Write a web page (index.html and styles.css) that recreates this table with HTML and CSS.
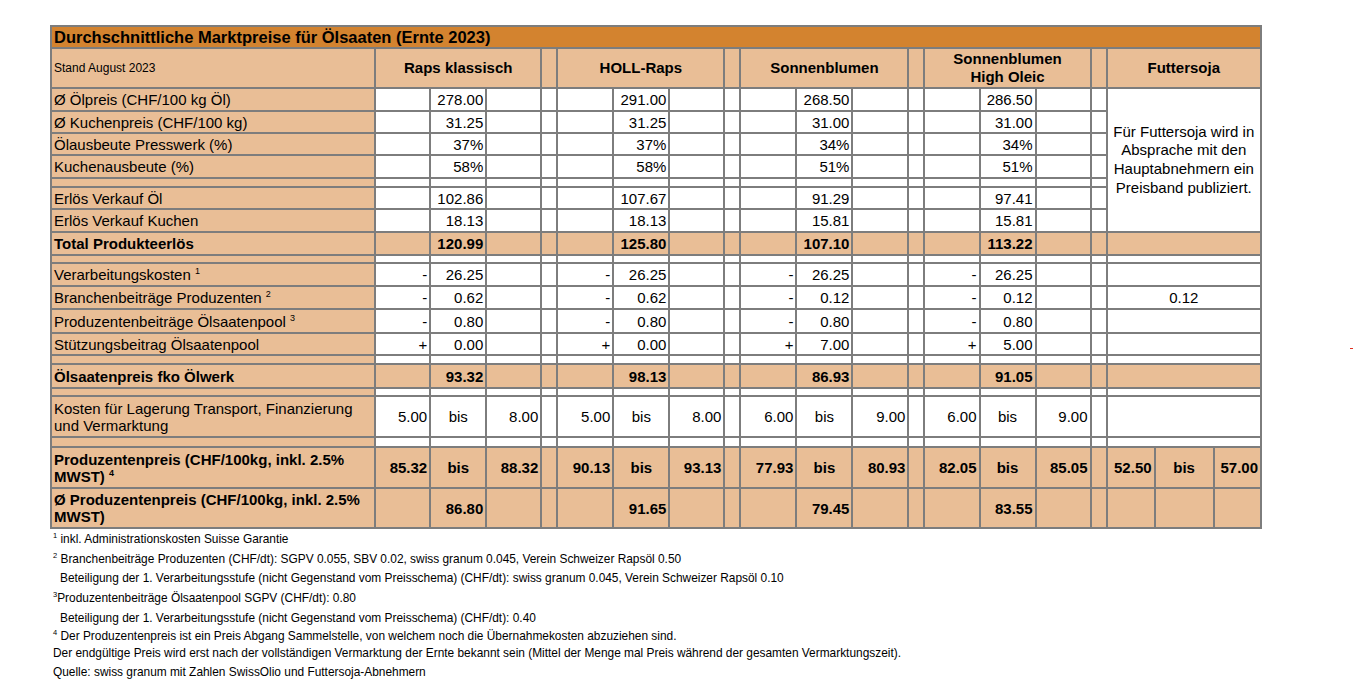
FILE: index.html
```html
<!DOCTYPE html>
<html lang="de">
<head>
<meta charset="utf-8">
<title>Durchschnittliche Marktpreise für Ölsaaten (Ernte 2023)</title>
<link rel="stylesheet" href="styles.css">
</head>
<body>
<div class="page">
<table class="grid">
<colgroup>
<col class="w-lab">
<col class="w55"><col class="w56"><col class="w55"><col class="wsp">
<col class="w56"><col class="w56"><col class="w55"><col class="wsp">
<col class="w56"><col class="w56"><col class="w56"><col class="wsp">
<col class="w55"><col class="w56"><col class="w55"><col class="wsp">
<col class="w48"><col class="w59"><col class="w47">
</colgroup>
<tbody>
<tr class="r-title"><td class="title" colspan="20">Durchschnittliche Marktpreise für Ölsaaten (Ernte 2023)</td></tr>
<tr class="r-head pk">
<td class="lab stand">Stand August 2023</td>
<td class="hd" colspan="3">Raps klassisch</td><td></td>
<td class="hd" colspan="3">HOLL-Raps</td><td></td>
<td class="hd" colspan="3">Sonnenblumen</td><td></td>
<td class="hd" colspan="3">Sonnenblumen<br>High Oleic</td><td></td>
<td class="hd" colspan="3">Futtersoja</td>
</tr>
<tr class="r23">
<td class="lab">Ø Ölpreis (CHF/100 kg Öl)</td>
<td></td><td class="v">278.00</td><td></td><td></td>
<td></td><td class="v">291.00</td><td></td><td></td>
<td></td><td class="v">268.50</td><td></td><td></td>
<td></td><td class="v">286.50</td><td></td><td></td>
<td class="soja" colspan="3" rowspan="7">Für Futtersoja wird in<br>Absprache mit den<br>Hauptabnehmern ein<br>Preisband publiziert.</td>
</tr>
<tr class="r22">
<td class="lab">Ø Kuchenpreis (CHF/100 kg)</td>
<td></td><td class="v">31.25</td><td></td><td></td>
<td></td><td class="v">31.25</td><td></td><td></td>
<td></td><td class="v">31.00</td><td></td><td></td>
<td></td><td class="v">31.00</td><td></td><td></td>
</tr>
<tr class="r22">
<td class="lab">Ölausbeute Presswerk (%)</td>
<td></td><td class="v">37%</td><td></td><td></td>
<td></td><td class="v">37%</td><td></td><td></td>
<td></td><td class="v">34%</td><td></td><td></td>
<td></td><td class="v">34%</td><td></td><td></td>
</tr>
<tr class="r23">
<td class="lab">Kuchenausbeute (%)</td>
<td></td><td class="v">58%</td><td></td><td></td>
<td></td><td class="v">58%</td><td></td><td></td>
<td></td><td class="v">51%</td><td></td><td></td>
<td></td><td class="v">51%</td><td></td><td></td>
</tr>
<tr class="r9">
<td class="lab"></td>
<td></td><td></td><td></td><td></td>
<td></td><td></td><td></td><td></td>
<td></td><td></td><td></td><td></td>
<td></td><td></td><td></td><td></td>
</tr>
<tr class="r22">
<td class="lab">Erlös Verkauf Öl</td>
<td></td><td class="v">102.86</td><td></td><td></td>
<td></td><td class="v">107.67</td><td></td><td></td>
<td></td><td class="v">91.29</td><td></td><td></td>
<td></td><td class="v">97.41</td><td></td><td></td>
</tr>
<tr class="r23">
<td class="lab">Erlös Verkauf Kuchen</td>
<td></td><td class="v">18.13</td><td></td><td></td>
<td></td><td class="v">18.13</td><td></td><td></td>
<td></td><td class="v">15.81</td><td></td><td></td>
<td></td><td class="v">15.81</td><td></td><td></td>
</tr>
<tr class="r23 pk b">
<td class="lab">Total Produkteerlös</td>
<td></td><td class="v">120.99</td><td></td><td></td>
<td></td><td class="v">125.80</td><td></td><td></td>
<td></td><td class="v">107.10</td><td></td><td></td>
<td></td><td class="v">113.22</td><td></td><td></td>
<td colspan="3"></td>
</tr>
<tr class="r8">
<td class="lab"></td>
<td></td><td></td><td></td><td></td>
<td></td><td></td><td></td><td></td>
<td></td><td></td><td></td><td></td>
<td></td><td></td><td></td><td></td>
<td colspan="3"></td>
</tr>
<tr class="r23">
<td class="lab">Verarbeitungskosten <sup>1</sup></td>
<td class="v">-</td><td class="v">26.25</td><td></td><td></td>
<td class="v">-</td><td class="v">26.25</td><td></td><td></td>
<td class="v">-</td><td class="v">26.25</td><td></td><td></td>
<td class="v">-</td><td class="v">26.25</td><td></td><td></td>
<td colspan="3"></td>
</tr>
<tr class="r23">
<td class="lab">Branchenbeiträge Produzenten <sup>2</sup></td>
<td class="v">-</td><td class="v">0.62</td><td></td><td></td>
<td class="v">-</td><td class="v">0.62</td><td></td><td></td>
<td class="v">-</td><td class="v">0.12</td><td></td><td></td>
<td class="v">-</td><td class="v">0.12</td><td></td><td></td>
<td class="c" colspan="3">0.12</td>
</tr>
<tr class="r24">
<td class="lab">Produzentenbeiträge Ölsaatenpool <sup>3</sup></td>
<td class="v">-</td><td class="v">0.80</td><td></td><td></td>
<td class="v">-</td><td class="v">0.80</td><td></td><td></td>
<td class="v">-</td><td class="v">0.80</td><td></td><td></td>
<td class="v">-</td><td class="v">0.80</td><td></td><td></td>
<td colspan="3"></td>
</tr>
<tr class="r22">
<td class="lab">Stützungsbeitrag Ölsaatenpool</td>
<td class="v">+</td><td class="v">0.00</td><td></td><td></td>
<td class="v">+</td><td class="v">0.00</td><td></td><td></td>
<td class="v">+</td><td class="v">7.00</td><td></td><td></td>
<td class="v">+</td><td class="v">5.00</td><td></td><td></td>
<td colspan="3"></td>
</tr>
<tr class="r9">
<td class="lab"></td>
<td></td><td></td><td></td><td></td>
<td></td><td></td><td></td><td></td>
<td></td><td></td><td></td><td></td>
<td></td><td></td><td></td><td></td>
<td colspan="3"></td>
</tr>
<tr class="r24 pk b">
<td class="lab">Ölsaatenpreis fko Ölwerk</td>
<td></td><td class="v">93.32</td><td></td><td></td>
<td></td><td class="v">98.13</td><td></td><td></td>
<td></td><td class="v">86.93</td><td></td><td></td>
<td></td><td class="v">91.05</td><td></td><td></td>
<td colspan="3"></td>
</tr>
<tr class="r8">
<td class="lab"></td>
<td></td><td></td><td></td><td></td>
<td></td><td></td><td></td><td></td>
<td></td><td></td><td></td><td></td>
<td></td><td></td><td></td><td></td>
<td colspan="3"></td>
</tr>
<tr class="r41">
<td class="lab">Kosten für Lagerung Transport, Finanzierung<br>und Vermarktung</td>
<td class="v">5.00</td><td class="c">bis</td><td class="v">8.00</td><td></td>
<td class="v">5.00</td><td class="c">bis</td><td class="v">8.00</td><td></td>
<td class="v">6.00</td><td class="c">bis</td><td class="v">9.00</td><td></td>
<td class="v">6.00</td><td class="c">bis</td><td class="v">9.00</td><td></td>
<td colspan="3"></td>
</tr>
<tr class="r10">
<td class="lab"></td>
<td></td><td></td><td></td><td></td>
<td></td><td></td><td></td><td></td>
<td></td><td></td><td></td><td></td>
<td></td><td></td><td></td><td></td>
<td colspan="3"></td>
</tr>
<tr class="r41 pk b">
<td class="lab">Produzentenpreis (CHF/100kg, inkl. 2.5%<br>MWST) <sup>4</sup></td>
<td class="v">85.32</td><td class="c">bis</td><td class="v">88.32</td><td></td>
<td class="v">90.13</td><td class="c">bis</td><td class="v">93.13</td><td></td>
<td class="v">77.93</td><td class="c">bis</td><td class="v">80.93</td><td></td>
<td class="v">82.05</td><td class="c">bis</td><td class="v">85.05</td><td></td>
<td class="v">52.50</td><td class="c">bis</td><td class="v">57.00</td>
</tr>
<tr class="r40 pk b">
<td class="lab">Ø Produzentenpreis (CHF/100kg, inkl. 2.5%<br>MWST)</td>
<td></td><td class="v">86.80</td><td></td><td></td>
<td></td><td class="v">91.65</td><td></td><td></td>
<td></td><td class="v">79.45</td><td></td><td></td>
<td></td><td class="v">83.55</td><td></td><td></td>
<td></td><td></td><td></td>
</tr>
</tbody>
</table>

<div class="notes">
<div class="ln"><sup>1</sup> inkl. Administrationskosten Suisse Garantie</div>
<div class="ln"><sup>2</sup> Branchenbeiträge Produzenten (CHF/dt): SGPV 0.055, SBV 0.02, swiss granum 0.045, Verein Schweizer Rapsöl 0.50</div>
<div class="ln ln19 ind">Beteiligung der 1. Verarbeitungsstufe (nicht Gegenstand vom Preisschema) (CHF/dt): swiss granum 0.045, Verein Schweizer Rapsöl 0.10</div>
<div class="ln"><sup>3</sup>Produzentenbeiträge Ölsaatenpool SGPV (CHF/dt): 0.80</div>
<div class="ln ind">Beteiligung der 1. Verarbeitungsstufe (nicht Gegenstand vom Preisschema) (CHF/dt): 0.40</div>
<div class="ln ln17"><sup>4</sup> Der Produzentenpreis ist ein Preis Abgang Sammelstelle, von welchem noch die Übernahmekosten abzuziehen sind.</div>
<div class="ln ln17">Der endgültige Preis wird erst nach der vollständigen Vermarktung der Ernte bekannt sein (Mittel der Menge mal Preis während der gesamten Vermarktungszeit).</div>
<div class="ln">Quelle: swiss granum mit Zahlen SwissOlio und Futtersoja-Abnehmern</div>
</div>
<span class="redmark"></span>
</div>
</body>
</html>
```

FILE: styles.css
```css
html, body {
  margin: 0;
  padding: 0;
  background: #ffffff;
}
body {
  font-family: "Liberation Sans", Arial, sans-serif;
  color: #000;
}
.page {
  position: relative;
  padding: 25px 0 0 50px;
  width: 1303px;
  height: 674px;
}
.grid {
  border-collapse: collapse;
  table-layout: fixed;
  width: 1212px;
  font-size: 15px;
  line-height: 17px;
}
.grid td {
  border: 2px solid #7d7d7d;
  padding: 0 2px;
  background: #ffffff;
  white-space: nowrap;
  overflow: hidden;
  vertical-align: middle;
}
.w-lab { width: 324px; }
.w55 { width: 55px; }
.w56 { width: 56px; }
.w47 { width: 47px; }
.w48 { width: 48px; }
.w59 { width: 59px; }
.wsp { width: 16px; }

.grid .title {
  background: #d3832f;
  font-weight: bold;
  font-size: 16.5px;
  padding: 0 2px;
  line-height: 18px;
}
.grid .pk td { background: #e9be96; }
.grid td.lab { background: #e9be96; }
.grid .b td { font-weight: bold; }
.grid .stand { font-size: 12px; }
.grid .hd {
  font-weight: bold;
  text-align: center;
  line-height: 18px;
}
.grid .v { text-align: right; }
.grid .c { text-align: center; }
.grid .soja {
  text-align: center;
  line-height: 18.7px;
  padding: 0 2px;
}
.grid sup {
  font-size: 9px;
  line-height: 0;
  vertical-align: 6px;
}

.r-title { height: 22px; }
.r-head { height: 40px; }
.r8 { height: 8px; }
.r9 { height: 9px; }
.r10 { height: 10px; }
.r22 { height: 22px; }
.r23 { height: 23px; }
.r24 { height: 24px; }
.r40 { height: 40px; }
.r41 { height: 41px; }

.notes {
  padding-left: 3px;
  font-size: 11.9px;
}
.notes .ln {
  height: 20px;
  line-height: 20px;
  white-space: nowrap;
}
.notes .ln19 { height: 19px; line-height: 19px; }
.notes .ln17 { height: 17px; line-height: 17px; }
.notes .ind { padding-left: 7px; }
.notes sup {
  font-size: 7.5px;
  line-height: 0;
  vertical-align: 5px;
}
.redmark {
  position: absolute;
  left: 1350px;
  top: 348px;
  width: 3px;
  height: 1px;
  background: #e03020;
}
```
